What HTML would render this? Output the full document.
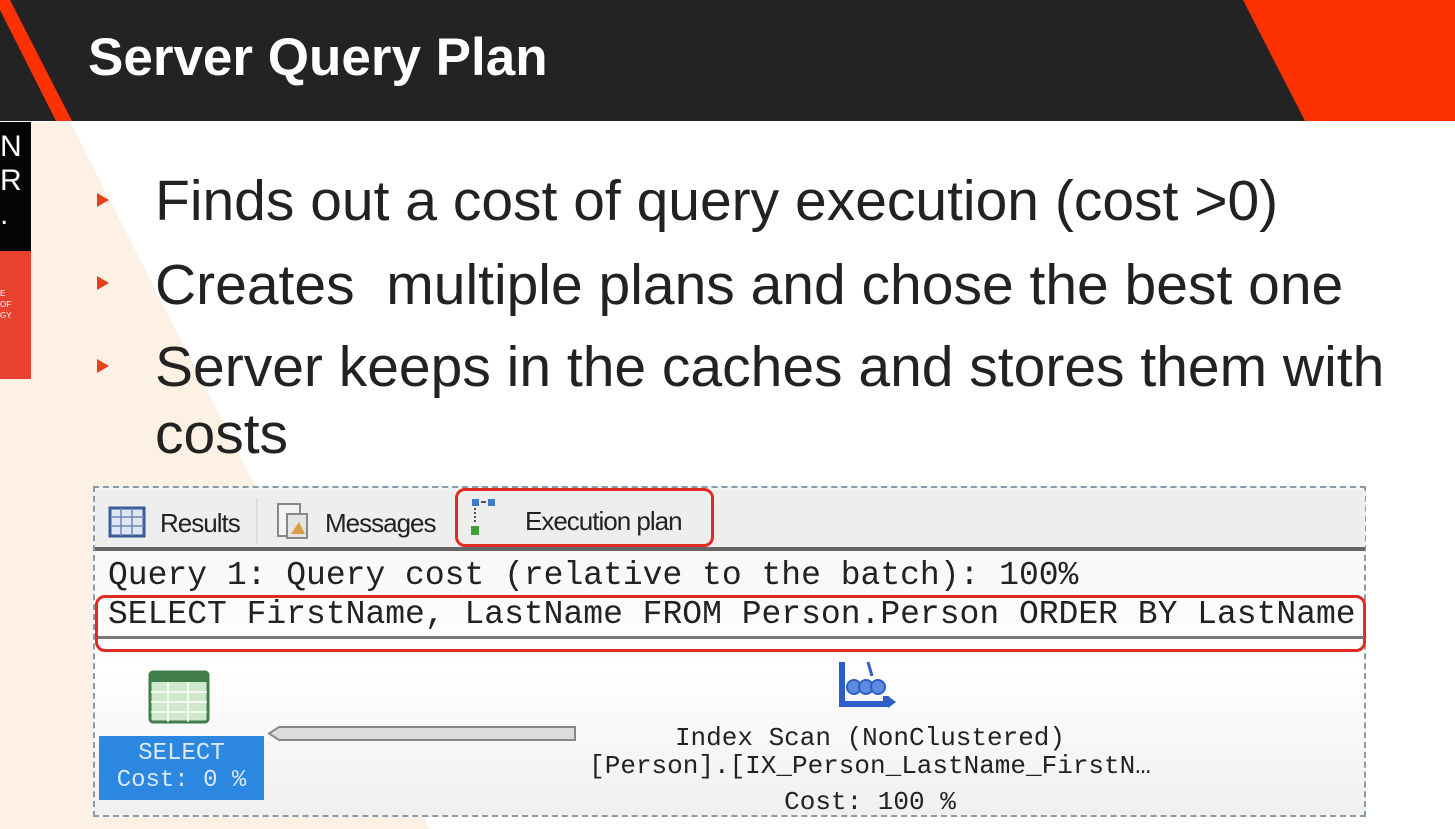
<!DOCTYPE html>
<html><head><meta charset="utf-8"><style>
*{margin:0;padding:0;box-sizing:border-box}
body{width:1455px;height:829px;position:relative;overflow:hidden;background:#fff;font-family:"Liberation Sans",sans-serif}
.a{position:absolute;white-space:nowrap}
.b{font-size:57px;line-height:57px;color:#222}
.m{font-family:"Liberation Mono",monospace;color:#222}
.tri{position:absolute;left:97px;width:0;height:0;border-left:12px solid #e8401c;border-top:7px solid transparent;border-bottom:7px solid transparent}
</style></head><body>
<svg class="a" style="left:0;top:0" width="1455" height="829">
<polygon points="0,122 70,122 430,829 0,829" fill="#fdf0e4"/>
<rect x="0" y="0" width="1455" height="121" fill="#232323"/>
<polygon points="1243,0 1455,0 1455,121 1305,121" fill="#fe3200"/>
<polygon points="0,10 0,0 10,0 72,121 56,121" fill="#fe3200"/>
<rect x="0" y="122" width="31" height="129" fill="#050505"/>
<rect x="0" y="251" width="31" height="128" fill="#e8412f"/>
</svg>
<div class="a" style="left:0;top:130px;color:#fff;font-size:30px;line-height:34px">N<br>R<br>.</div>
<div class="a" style="left:0;top:288px;color:#fff;font-size:8px;line-height:11px">E<br>OF<br>GY</div>
<div class="a" style="left:88px;top:27px;color:#fff;font-size:53px;font-weight:bold">Server Query Plan</div>
<div class="tri" style="top:193px"></div>
<div class="tri" style="top:276px"></div>
<div class="tri" style="top:359px"></div>
<div class="a b" style="left:155px;top:173px">Finds out a cost of query execution (cost &gt;0)</div>
<div class="a b" style="left:155px;top:257px">Creates&nbsp; multiple plans and chose the best one</div>
<div class="a b" style="left:155px;top:339px">Server keeps in the caches and stores them with</div>
<div class="a b" style="left:155px;top:406px">costs</div>
<div class="a" style="left:93px;top:486px;width:1273px;height:331px;border:2px dashed #8a9aa8;background:linear-gradient(#f4f4f4,#fafafa 30%,#fff 55%,#f0f0f0)"></div>
<div class="a" style="left:95px;top:490px;width:1270px;height:58px;background:#eeeeee"></div>
<div class="a" style="left:95px;top:547px;width:1270px;height:4px;background:#666"></div>
<svg class="a" style="left:108px;top:506px" width="40" height="32"><rect x="2" y="2" width="34" height="28" fill="#dfe6f2" stroke="#3a5c9a" stroke-width="3"/><path d="M2 11H36M2 20H36M13 2V30M24 2V30" stroke="#6d86b5" stroke-width="1.5"/></svg>
<div class="a" style="left:160px;top:508px;font-size:26px;color:#222;letter-spacing:-1px">Results</div>
<div class="a" style="left:256px;top:498px;width:2px;height:46px;background:#ddd"></div>
<svg class="a" style="left:275px;top:500px" width="36" height="42"><rect x="3" y="4" width="22" height="32" fill="#f4f4f4" stroke="#888" stroke-width="2"/><rect x="12" y="14" width="20" height="24" fill="#e5e5e5" stroke="#888" stroke-width="2"/><path d="M16 34L24 22L30 34Z" fill="#d9a040"/></svg>
<div class="a" style="left:325px;top:508px;font-size:26px;color:#222;letter-spacing:-1px">Messages</div>
<div class="a" style="left:455px;top:488px;width:259px;height:59px;border:3px solid #e02a22;border-radius:10px"></div>
<svg class="a" style="left:470px;top:496px" width="40" height="44"><rect x="2" y="3" width="7" height="7" fill="#3d7ad1"/><rect x="18" y="3" width="7" height="7" fill="#3d7ad1"/><path d="M11 6H16" stroke="#555" stroke-width="2"/><path d="M5 12V26" stroke="#555" stroke-width="2" stroke-dasharray="2 2"/><rect x="1" y="30" width="8" height="9" fill="#3fa035"/></svg>
<div class="a" style="left:525px;top:506px;font-size:26px;color:#222;letter-spacing:-1px">Execution plan</div>
<div class="a m" style="left:108px;top:559px;font-size:33px;line-height:34px">Query 1: Query cost (relative to the batch): 100%</div>
<div class="a" style="left:95px;top:595px;width:1271px;height:57px;border:3px solid #e02a22;border-radius:10px"></div>
<div class="a" style="left:98px;top:636px;width:1266px;height:3px;background:#777"></div>
<div class="a m" style="left:108px;top:598px;font-size:33px;line-height:34px">SELECT FirstName, LastName FROM Person.Person ORDER BY LastName</div>
<svg class="a" style="left:148px;top:670px" width="64" height="54"><rect x="2" y="2" width="58" height="50" rx="3" fill="#cfe8cc" stroke="#3f7d4a" stroke-width="3"/><rect x="3" y="3" width="56" height="9" fill="#3f7d4a"/><path d="M3 22H59M3 32H59M3 42H59M20 12V52M40 12V52" stroke="#fff" stroke-width="1.5"/></svg>
<div class="a" style="left:99px;top:736px;width:165px;height:64px;background:#2b87df"></div>
<div class="a m" style="left:99px;top:740px;width:165px;text-align:center;font-size:24px;color:#dce8f6;line-height:27px">SELECT<br>Cost: 0 %</div>
<svg class="a" style="left:265px;top:724px" width="315" height="20"><path d="M14 3H310V16H14L4 9.5Z" fill="#dcdcdc" stroke="#888" stroke-width="2"/></svg>
<svg class="a" style="left:838px;top:652px" width="62" height="60"><path d="M4 10V52H48V44" fill="none" stroke="#2f5ec8" stroke-width="6"/><circle cx="16" cy="35" r="7" fill="#5c8be0" stroke="#2f5ec8" stroke-width="2"/><circle cx="28" cy="35" r="7" fill="#5c8be0" stroke="#2f5ec8" stroke-width="2"/><circle cx="40" cy="35" r="7" fill="#5c8be0" stroke="#2f5ec8" stroke-width="2"/><path d="M30 10L34 24" stroke="#2f5ec8" stroke-width="3"/><path d="M50 44L58 50L50 56Z" fill="#2f5ec8"/></svg>
<div class="a m" style="left:560px;top:724px;width:620px;text-align:center;font-size:26px;line-height:28px">Index Scan (NonClustered)<br>[Person].[IX_Person_LastName_FirstN…</div>
<div class="a m" style="left:560px;top:788px;width:620px;text-align:center;font-size:26px;line-height:28px">Cost: 100 %</div>
</body></html>
